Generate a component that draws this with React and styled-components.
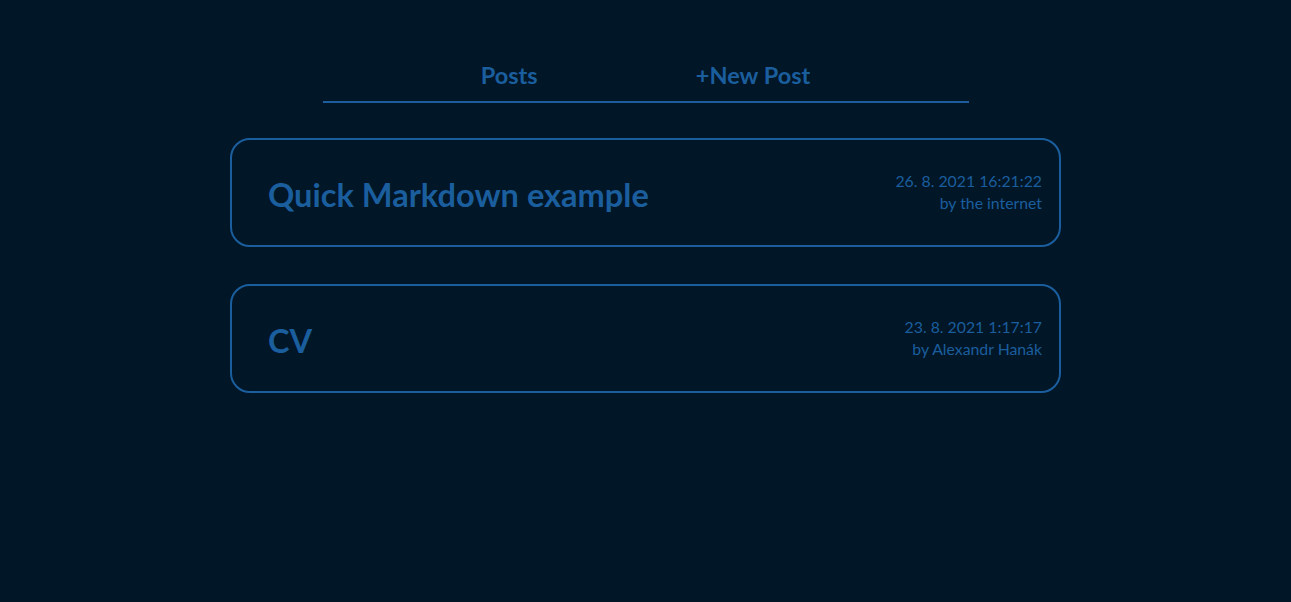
import React from 'react';
import styled, { createGlobalStyle } from 'styled-components';

const GlobalStyle = createGlobalStyle`
  html, body {
    margin: 0;
    padding: 0;
    background: #011627;
    font-family: Lato, "Open Sans", sans-serif;
  }
`;

const Page = styled.div`
  min-height: 602px;
  background: #011627;
  display: flex;
  flex-direction: column;
  align-items: center;
  padding-top: 61px;
  box-sizing: border-box;
`;

const Nav = styled.nav`
  width: 646px;
  display: flex;
  justify-content: space-evenly;
  border-bottom: 2px solid #1b5e9e;
  padding-bottom: 12px;
`;

const NavLink = styled.a`
  color: #1b5e9e;
  font-weight: 700;
  font-size: 23.5px;
  line-height: 28px;
  text-decoration: none;
  cursor: pointer;
`;

const List = styled.div`
  margin-top: 35px;
  display: flex;
  flex-direction: column;
  gap: 37px;
`;

const Card = styled.div`
  width: 831px;
  height: 109px;
  box-sizing: border-box;
  border: 2px solid #1b5e9e;
  border-radius: 20px;
  display: flex;
  align-items: center;
  justify-content: space-between;
  padding: 0 17px 0 36px;
`;

const Title = styled.h2`
  margin: 3px 0 0;
  color: #1b5e9e;
  font-size: 32.6px;
  font-weight: 700;
`;

const Meta = styled.div`
  text-align: right;
  color: #1b5e9e;
  font-size: 15.8px;
  line-height: 22px;
  margin-top: -1px;
`;

const posts = [
  { title: 'Quick Markdown example', date: '26. 8. 2021 16:21:22', author: 'the internet' },
  { title: 'CV', date: '23. 8. 2021 1:17:17', author: 'Alexandr Hanák' },
];

export default function App() {
  return (
    <>
      <GlobalStyle />
      <Page>
        <Nav>
          <NavLink>Posts</NavLink>
          <NavLink>+New Post</NavLink>
        </Nav>
        <List>
          {posts.map((p) => (
            <Card key={p.title}>
              <Title>{p.title}</Title>
              <Meta>
                <div>{p.date}</div>
                <div>by {p.author}</div>
              </Meta>
            </Card>
          ))}
        </List>
      </Page>
    </>
  );
}
